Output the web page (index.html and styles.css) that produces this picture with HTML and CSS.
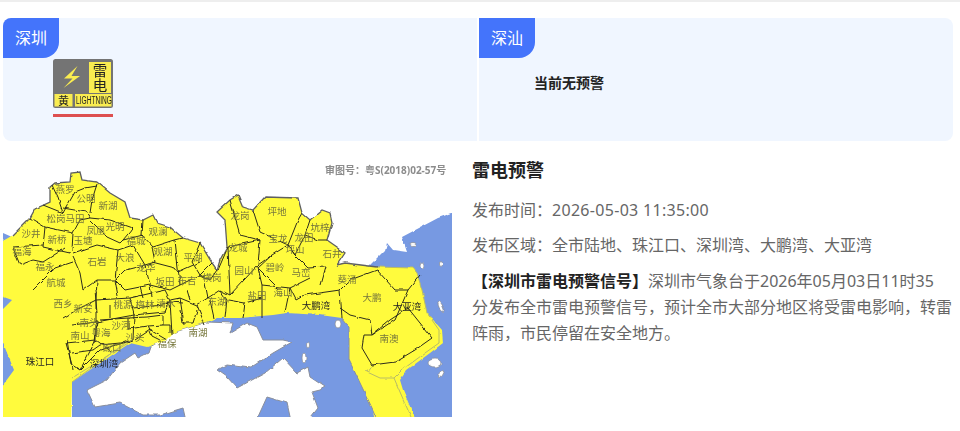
FILE: index.html
```html
<!doctype html>
<html lang="zh-CN">
<head>
  <meta charset="utf-8" />
  <meta name="viewport" content="width=device-width,initial-scale=1" />
  <title>深圳天气预警</title>
  <link rel="stylesheet" href="styles.css">
</head>
<body>
  <div class="topline"></div>

  <section class="areas">
    <div class="area">
      <div class="tag">深圳</div>
      <div class="signal">
        <svg class="signal-icon" viewBox="0 0 60 49" width="60" height="49">
          <rect width="60" height="49" rx="2.5" fill="#747474"/>
          <rect x="36" y="3" width="22" height="31" fill="#f9ec50"/>
          <rect x="1.5" y="35" width="18" height="12.5" fill="#f9ec50"/>
          <rect x="22" y="35" width="36.5" height="12.5" fill="#f9ec50"/>
          <polygon points="24.5,7 11,19.5 19.5,19.5 10.5,29 27,17 18.5,17" fill="#f9ec50"/>
          <text class="sig-cn" x="47" y="17">雷</text>
          <text class="sig-cn" x="47" y="32">电</text>
          <text class="sig-sm" x="10.5" y="45.5">黄</text>
          <text class="sig-en" transform="translate(23 45) scale(.66 1)">LIGHTNING</text>
        </svg>
        <div class="signal-bar"></div>
      </div>
    </div>
    <div class="area-gap"></div>
    <div class="area">
      <div class="tag">深汕</div>
      <div class="none">当前无预警</div>
    </div>
  </section>

  <section class="detail">
    <div class="map">
      <svg viewBox="3 152 449 265" width="449" height="265">
        <defs>
          <filter id="rough" filterUnits="userSpaceOnUse" x="-20" y="130" width="500" height="310" color-interpolation-filters="sRGB">
            <feTurbulence type="fractalNoise" baseFrequency="0.11" numOctaves="2" seed="4"/>
            <feDisplacementMap in="SourceGraphic" scale="3" xChannelSelector="R" yChannelSelector="G"/>
          </filter>
        </defs>
        <g filter="url(#rough)">
          <!-- sea -->
          <path class="sea" d="M470 213L452 213 438 218 402 237 407 252 393 250 387 243 385 250 377 258 365 270 365 320 385 430 470 430Z"/>
          <path class="sea" d="M72 430L72 375 135 335 240 310 360 310 385 430Z"/>
          <path class="sea" d="M-10 231L3 233 12 237 3 241-10 243Z"/>
          <!-- hong kong side -->
          <path class="hk" d="M87 390L107 380 120 363 135 353 138 358 148 353 150 347 175 332 207 322 233 323 230 333 247 323 257 327 263 340 283 340 292 342 273 353 250 368 227 365 217 370 227 377 237 388 265 373 283 358 297 373 308 367 310 377 325 387 320 390 312 392 318 408 301 430 293 430 287 403 267 397 252 430 188 430 183 408 160 415 143 415 120 403 95 407Z"/>
          <ellipse class="isle" cx="338" cy="324" rx="3" ry="4"/>
          <ellipse class="isle" cx="304" cy="358" rx="2" ry="5"/>
          <ellipse class="isle" cx="441" cy="307" rx="2" ry="6" transform="rotate(-25 441 307)"/>
          <ellipse class="isle" cx="435" cy="363" rx="7" ry="4"/>
          <ellipse class="isle" cx="441" cy="374" rx="2" ry="4" transform="rotate(35 441 374)"/>
          <ellipse class="isle" cx="413" cy="244" rx="3" ry="1.5"/>
          <ellipse class="isle" cx="422" cy="265" rx="2" ry="3"/>
          <ellipse class="isle" cx="441" cy="263" rx="1.5" ry="2.5"/>
          <ellipse class="isle" cx="308" cy="345" rx="1.5" ry="3"/>
          <!-- yellow warning area -->
          <path class="land" d="M-10 243L3 241 13 235 30 218 35 209 50 202 50 187 55 183 70 182 71 173 80 172 82 180 97 182 110 193 125 202 130 218 143 220 153 215 157 223 170 227 183 238 200 243 212 263 217 270 220 260 227 247 225 220 217 212 230 200 238 195 243 207 253 210 265 197 298 198 302 213 310 220 322 210 330 213 332 222 327 240 337 247 345 253 337 265 345 263 377 267 413 268 417 273 422 290 427 313 442 330 443 343 430 353 407 370 400 380 403 390 420 430 376 430 373 410 349 360 349 327 342 318 320 315 287 313 273 315 240 318 217 318 207 322 175 332 167 340 147 347 130 343 72 382 71 430-10 430Z"/>
          <path class="sea" d="M-10 292L12 300-10 322ZM-10 340L3 343 14 370 3 385-10 388Z"/>
          <path class="coast" d="M13 235L30 218 35 209 50 202 50 187 55 183 70 182 71 173 80 172 82 180 97 182 110 193 125 202 130 218 143 220 153 215 157 223 170 227 183 238 200 243 212 263 217 270 220 260 227 247 225 220 217 212 230 200 238 195 243 207 253 210 265 197 298 198 302 213 310 220 322 210 330 213 332 222 327 240 337 247 345 253 337 265 345 263 377 267"/>
          <path class="edge" d="M72 382L132 338M72 378L128 343M377 267L413 268 417 273 422 290 427 313 439 330 439 343 425 353 402 370 394 378 400 392 411 417M365 371L380 378 394 378M367 372L372 365"/>
          <path class="edge-grey" d="M342 318L349 327 349 360 373 410 376 417"/>
          <!-- district borders -->
          <path class="line" d="M97 184L92 200 90 213M75 192L85 188 97 186M43 205L63 213 75 192M52 185L58 198 63 213M63 208L86 212 90 218M30 218L45 227 73 233M73 233L80 220 90 218 110 220 133 228 123 240M90 220L107 237 120 243 123 240 143 235M143 220L142 235 153 247 175 240 183 238M45 227L43 247 70 253M13 247L43 245M13 248L20 265 33 260M72 250L73 233M73 253L97 245 118 250 115 280M118 250L133 245 145 265M73 257L80 273 83 290M33 260L43 262 65 248M33 290L55 268 73 262M83 290L97 280 115 280 125 290M115 280L125 270 145 265 155 262 152 247M152 262L175 268 178 272 200 262M175 240L178 268 180 285M200 243L192 262 200 275 212 263M145 265L150 285 170 290 180 285 200 275 210 280 217 270M125 290L150 285M97 280L96 300 96 322M63 318L80 308 96 300 130 298 165 290M130 298L134 315 165 312 170 300M165 290L170 300 180 298 197 305 220 290 230 295M170 300L172 335M180 298L184 325M197 305L205 325M134 315L133 340M96 322L134 315M72 325L96 322 96 340 66 343M66 343L72 365 80 370 96 340M80 370L100 350 133 340M96 340L112 352M135 340L150 330 167 340M220 290L227 300 225 317M230 295L228 247 260 240M228 247L218 270M230 200L240 235 260 240M253 210L260 232 288 245M260 240L258 265 230 295M288 245L298 220 302 213M310 220L305 235 318 240 327 240M305 235L295 255 288 245M295 255L308 268 325 267 320 285M258 265L272 255 288 245 295 255M272 255L258 268 262 285 290 288 310 278M258 268L280 290M262 285L262 318M290 288L285 312M290 288L296 300 305 295 340 290 350 280 377 270M340 290L342 318M377 270L395 290 408 290 420 275M340 308L350 315 370 320 372 335 395 320 408 290M372 335L390 320 408 308 432 338 415 350 395 362 372 365 362 348 364 335 372 335"/>
          <path class="line" d="M100 320L128 318 147 317 163 315M133 308L163 305 170 302 183 303M128 318L128 329 148 326 163 325M163 315L163 325 170 325 170 333M180 310L182 323 193 323 197 310M95 290L97 313M97 320L95 343M110 305L110 318M72 353L93 350 100 345 120 343 128 340M67 340L72 370M148 326L152 336 160 340M115 280L118 296M140 287L143 298M150 285L152 297M187 290L190 300M205 283L208 298M228 300L245 303 262 298M245 303L243 318M210 300L214 318"/>
        </g>
        <!-- place names -->
        <g class="names">
          <text x="65" y="193">燕罗</text><text x="86" y="202">公明</text><text x="108" y="209">新湖</text>
          <text x="56" y="222">松岗</text><text x="75" y="222">马田</text><text x="115" y="230">光明</text>
          <text x="96" y="234">凤凰</text><text x="31" y="237">沙井</text><text x="57" y="243">新桥</text>
          <text x="83" y="244">玉塘</text><text x="136" y="244">福城</text><text x="158" y="235">观澜</text>
          <text x="163" y="255">观湖</text><text x="193" y="261">平湖</text><text x="97" y="265">石岩</text>
          <text x="125" y="261">大浪</text><text x="146" y="271">龙华</text><text x="22" y="255">福海</text>
          <text x="45" y="270">福永</text><text x="56" y="286">航城</text><text x="165" y="285">坂田</text>
          <text x="187" y="284">布吉</text><text x="212" y="281">横岗</text><text x="63" y="307">西乡</text>
          <text x="83" y="312">新安</text><text x="123" y="308">桃源</text><text x="145" y="308">梅林</text>
          <text x="166" y="307">清水</text><text x="217" y="305">东湖</text><text x="89" y="326">南头</text>
          <text x="80" y="339">南山</text><text x="101" y="336">粤海</text><text x="121" y="329">沙河</text>
          <text x="112" y="351">蛇口</text><text x="135" y="341">沙头</text><text x="167" y="347">福保</text>
          <text x="198" y="336">南湖</text><text x="257" y="299">盐田</text><text x="283" y="296">海山</text>
          <text x="372" y="301">大鹏</text><text x="389" y="342">南澳</text><text x="347" y="283">葵涌</text>
          <text x="240" y="219">龙岗</text><text x="277" y="215">坪地</text><text x="320" y="231">坑梓</text>
          <text x="295" y="253">坪山</text><text x="304" y="241">龙田</text><text x="278" y="242">宝龙</text>
          <text x="238" y="251">龙城</text><text x="332" y="257">石井</text><text x="275" y="271">碧岭</text>
          <text x="301" y="276">马峦</text><text x="244" y="274">园山</text>
        </g>
        <g class="names names-dark">
          <text x="40" y="365">珠江口</text><text x="104" y="367">深圳湾</text>
          <text x="316" y="309">大鹏湾</text><text x="407" y="310">大亚湾</text>
        </g>
        <text class="permit" x="325" y="173.5">审图号：粤S(2018)02-57号</text>
      </svg>
    </div>

    <div class="info">
      <h2>雷电预警</h2>
      <p class="meta">发布时间：<span class="time">2026-05-03 11:35:00</span></p>
      <p class="meta">发布区域：全市陆地、珠江口、深圳湾、大鹏湾、大亚湾</p>
      <p class="desc"><b>【深圳市雷电预警信号】</b>深圳市气象台于2026年05月03日11时35<br>分发布全市雷电预警信号，预计全市大部分地区将受雷电影响，转雷阵雨，市民停留在安全地方。</p>
    </div>
  </section>
</body>
</html>
```

FILE: styles.css
```css
body{margin:0;background:#fff;color:#666;font-family:"Noto Sans","Noto Sans CJK SC",sans-serif;overflow:hidden}
.topline{height:2px;background:#eee}
.areas{display:flex;margin:16px 7px 0 3px;border-radius:8px;overflow:hidden}
.area{flex:1;height:123px;background:#f0f6ff}
.area-gap{width:2px;background:#fff}
.tag{width:56px;height:40px;background:#4474fb;color:#fff;font-size:16px;line-height:40px;text-align:center;border-radius:0 0 16px 0}
.signal{margin-left:50px;margin-top:1px;width:60px;filter:blur(.3px)}
.signal-icon{display:block}
.signal-bar{height:3px;margin-top:6px;background:#dd4f50}
.sig-cn,.sig-sm{font-size:14.5px;fill:#222;text-anchor:middle}
.sig-sm{font-size:11px}
.sig-en{font-size:10px;fill:#222;font-family:"Liberation Sans",sans-serif}
.none{margin:15px 0 0 55px;font-size:14px;font-weight:700;color:#222;line-height:20px}

.detail{display:flex;gap:20px;padding:11px 7px 0 3px}
.map{width:449px;height:265px;flex:none}
.map svg{display:block;filter:blur(.45px)}
.sea{fill:#7799e2}
.hk{fill:#fff;stroke:#8a8f9c;stroke-width:1}
.isle{fill:#fff;stroke:#8a8f9c;stroke-width:.8}
.land{fill:#fffb3d}
.coast{fill:none;stroke:#5f6060;stroke-width:1.3}
.edge{fill:none;stroke:#b9bc66;stroke-width:1}
.edge-grey{fill:none;stroke:#8a8f9c;stroke-width:1}
.line{fill:none;stroke:#2d2d1c;stroke-width:1;stroke-linejoin:round}
.names text{font-size:9.5px;fill:#77773c;text-anchor:middle}
.names-dark text{fill:#222}
.permit{font-size:10px;font-weight:700;fill:#8c8c8c}

.info{flex:1;min-width:0}
.info h2{margin:6px 0 0;font-size:18px;line-height:24px;font-weight:700;color:#222}
.meta{margin:16px 0 0;font-size:16px;line-height:24px}
.meta + .meta{margin-top:11px}
.time{letter-spacing:.3px}
.desc{margin:11px 0 0;font-size:16px;line-height:26px}
.desc b{color:#222}
```
